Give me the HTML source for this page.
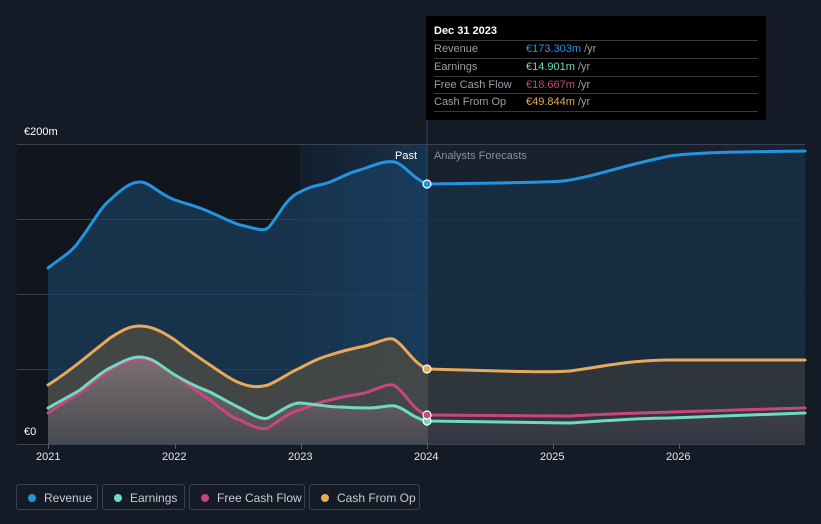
<!DOCTYPE html>
<html><head><meta charset="utf-8"><style>
body{margin:0;width:821px;height:524px;background:#151b26;font-family:"Liberation Sans",sans-serif;overflow:hidden;position:relative}
.tip{position:absolute;left:426px;top:16px;width:340px;height:104px;background:#000;color:#fff;font-size:11px}
.tip .h{position:absolute;left:8px;top:9px;font-weight:bold}
.row{position:absolute;left:8px;width:324px;height:17px;border-top:1px solid #3a3a3a;line-height:17px;color:#9aa0a8}
.row span.v{position:absolute;left:92px}
.leg{position:absolute;top:484px;height:26px;border:1px solid #3a4150;border-radius:3px;color:#c8ccd2;font-size:12px;line-height:26px;box-sizing:border-box}
.leg i{position:absolute;left:11px;top:9px;width:8px;height:8px;border-radius:50%}
.leg b{font-weight:normal;position:absolute;left:27px}
.ax{position:absolute;top:451px;color:#e6e6e6;font-size:11px}
</style></head><body>
<svg width="821" height="524" style="position:absolute;left:0;top:0">
<defs>
<linearGradient id="hl" x1="0" x2="1"><stop offset="0" stop-color="#1a3550" stop-opacity=".3"/><stop offset="1" stop-color="#1a4a70" stop-opacity=".6"/></linearGradient>
<linearGradient id="pg" x1="0" y1="0" x2="0" y2="1"><stop offset="0" stop-color="#8a7a7a"/><stop offset="1" stop-color="#4a4a52"/></linearGradient>
</defs>
<rect x="17" y="144" width="410" height="300" fill="#11151d"/>
<rect x="300" y="144" width="127" height="300" fill="url(#hl)"/>
<rect x="427" y="144" width="378" height="300" fill="#18212f"/>
<g stroke="#3a4150" stroke-width="1"><line x1="17" y1="144.5" x2="805" y2="144.5"/><line x1="17" y1="219.5" x2="805" y2="219.5"/><line x1="17" y1="294.5" x2="805" y2="294.5"/><line x1="17" y1="369.5" x2="805" y2="369.5"/><line x1="17" y1="444.5" x2="805" y2="444.5"/></g>
<line x1="427" y1="120" x2="427" y2="444" stroke="#2a4a66"/>
<path d="M48,268 C65,255 72,252 80,240 C95,220 100,208 110,200 C125,186 132,182 140,182 C150,182 160,195 175,200 C190,205 195,206 205,210 C220,216 230,222 240,225 C255,228 262,232 268,228 C278,218 285,198 300,192 C315,184 320,186 330,182 C345,176 350,172 360,170 C375,165 385,160 395,162 C405,165 412,178 427,184 L500,183 C540,182 560,182 570,180 C600,175 620,166 670,156 C700,152 740,152 805,151 L805,444 L48,444Z" fill="#1a3e60" fill-opacity=".7"/>
<path d="M48,385 C62,376 70,370 80,362 C95,350 105,342 110,338 C125,328 132,326 140,326 C150,326 160,330 175,340 C190,352 200,358 210,365 C225,375 232,380 240,383 C252,388 260,387 268,385 C280,380 290,372 300,368 C315,360 320,358 330,355 C345,350 355,348 365,346 C380,342 390,336 395,340 C405,346 412,362 427,369 L500,371 C540,372 560,372 570,371 C600,367 630,360 670,360 L805,360 L805,444 L48,444Z" fill="#4a4a44" fill-opacity=".85"/>
<path d="M48,408 C62,400 70,396 80,390 C95,378 105,370 110,368 C125,360 132,357 140,357 C155,358 160,366 175,375 C190,384 200,388 210,392 C225,400 232,404 240,408 C255,416 262,420 268,418 C280,412 290,403 300,403 C320,405 330,407 340,407 C355,408 365,408 370,408 C385,407 390,405 395,406 C405,408 412,418 427,421 L570,423 C600,421 640,418 670,418 L805,413 L805,444 L48,444Z" fill="url(#pg)" fill-opacity=".8"/>
<rect x="428" y="145" width="377" height="299" fill="#18212f" fill-opacity=".45"/>
<g fill="none" stroke-width="3" stroke-linecap="round">
<path d="M48,268 C65,255 72,252 80,240 C95,220 100,208 110,200 C125,186 132,182 140,182 C150,182 160,195 175,200 C190,205 195,206 205,210 C220,216 230,222 240,225 C255,228 262,232 268,228 C278,218 285,198 300,192 C315,184 320,186 330,182 C345,176 350,172 360,170 C375,165 385,160 395,162 C405,165 412,178 427,184 L500,183 C540,182 560,182 570,180 C600,175 620,166 670,156 C700,152 740,152 805,151" stroke="#2394e0"/>
<path d="M48,385 C62,376 70,370 80,362 C95,350 105,342 110,338 C125,328 132,326 140,326 C150,326 160,330 175,340 C190,352 200,358 210,365 C225,375 232,380 240,383 C252,388 260,387 268,385 C280,380 290,372 300,368 C315,360 320,358 330,355 C345,350 355,348 365,346 C380,342 390,336 395,340 C405,346 412,362 427,369 L500,371 C540,372 560,372 570,371 C600,367 630,360 670,360 L805,360" stroke="#e8a95a"/>
<path d="M48,413 C62,404 70,398 80,393 C95,380 105,374 110,370 C125,362 132,360 140,360 C150,360 160,365 175,375 C190,387 200,393 210,400 C225,412 232,418 240,420 C255,428 262,430 268,428 C280,420 290,412 300,410 C315,404 320,402 330,400 C345,396 355,395 365,393 C380,388 390,382 395,386 C405,392 412,410 427,415 L570,416 C620,413 700,411 805,408" stroke="#c8457f"/>
<path d="M48,408 C62,400 70,396 80,390 C95,378 105,370 110,368 C125,360 132,357 140,357 C155,358 160,366 175,375 C190,384 200,388 210,392 C225,400 232,404 240,408 C255,416 262,420 268,418 C280,412 290,403 300,403 C320,405 330,407 340,407 C355,408 365,408 370,408 C385,407 390,405 395,406 C405,408 412,418 427,421 L570,423 C600,421 640,418 670,418 L805,413" stroke="#6fd9c2"/>
</g>
<g stroke="#fff" stroke-width="1.2"><circle cx="427" cy="184" r="4" fill="#2394e0"/><circle cx="427" cy="369" r="4" fill="#e8a95a"/><circle cx="427" cy="421" r="4" fill="#6fd9c2"/><circle cx="427" cy="415" r="4" fill="#c8457f"/></g>
<g stroke="#555c68"><line x1="48.5" y1="444" x2="48.5" y2="449"/><line x1="175.5" y1="444" x2="175.5" y2="449"/><line x1="301.5" y1="444" x2="301.5" y2="449"/><line x1="427.5" y1="444" x2="427.5" y2="449"/><line x1="553.5" y1="444" x2="553.5" y2="449"/><line x1="679.5" y1="444" x2="679.5" y2="449"/></g>
</svg>
<div style="position:absolute;left:24px;top:126px;color:#fff;font-size:11px">€200m</div>
<div style="position:absolute;left:24px;top:426px;color:#fff;font-size:11px">€0</div>
<div style="position:absolute;left:395px;top:150px;color:#fff;font-size:11px">Past</div>
<div style="position:absolute;left:434px;top:150px;color:#8a9099;font-size:11px">Analysts Forecasts</div>
<div class="ax" style="left:36px">2021</div><div class="ax" style="left:162px">2022</div><div class="ax" style="left:288px">2023</div><div class="ax" style="left:414px">2024</div><div class="ax" style="left:540px">2025</div><div class="ax" style="left:666px">2026</div>
<div class="tip"><div class="h">Dec 31 2023</div>
<div class="row" style="top:24px">Revenue<span class="v"><span style="color:#2394e0">€173.303m</span> /yr</span></div>
<div class="row" style="top:42px">Earnings<span class="v"><span style="color:#6fd9c2">€14.901m</span> /yr</span></div>
<div class="row" style="top:60px">Free Cash Flow<span class="v"><span style="color:#c8457f">€18.667m</span> /yr</span></div>
<div class="row" style="top:77px;border-bottom:1px solid #3a3a3a">Cash From Op<span class="v"><span style="color:#e8a95a">€49.844m</span> /yr</span></div>
</div>
<div class="leg" style="left:16px;width:82px"><i style="background:#2394e0"></i><b>Revenue</b></div>
<div class="leg" style="left:102px;width:83px"><i style="background:#6fd9c2"></i><b>Earnings</b></div>
<div class="leg" style="left:189px;width:116px"><i style="background:#c8457f"></i><b>Free Cash Flow</b></div>
<div class="leg" style="left:309px;width:111px"><i style="background:#e8a95a"></i><b>Cash From Op</b></div>
</body></html>
